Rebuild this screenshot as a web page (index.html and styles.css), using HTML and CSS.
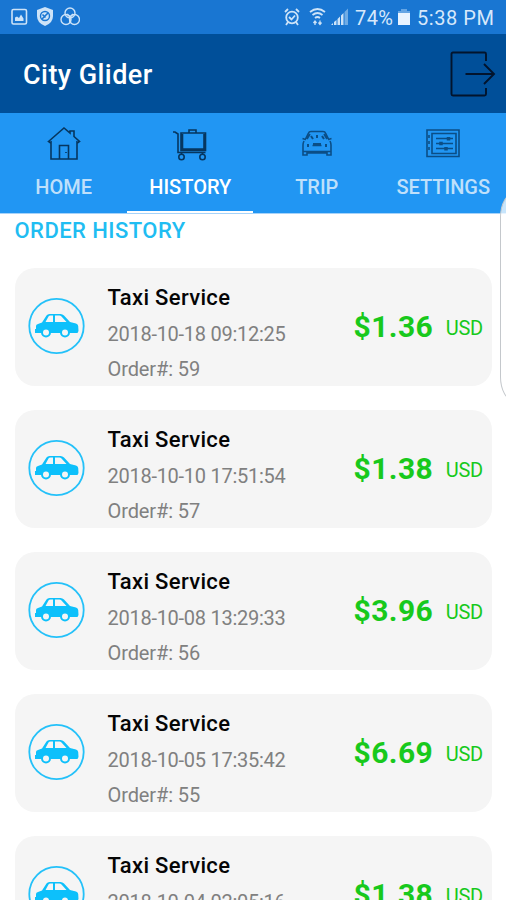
FILE: index.html
```html
<!DOCTYPE html>
<html lang="en">
<head>
<meta charset="utf-8">
<title>City Glider</title>
<link rel="stylesheet" href="styles.css">
</head>
<body>
<svg class="defs" aria-hidden="true">
  <symbol id="taxi" viewBox="0 0 58 58">
    <circle cx="28.500" cy="29" r="27.200" fill="none" stroke="#24c1f9" stroke-width="1.800"/>
    <path fill="#0dc0fb" fill-rule="evenodd" d="M7 36v-4h1v-3q0-1.500 2-2l4-1.500 4.500-7q1-1.500 3-1.500h11q2 0 3.500 1.500l6 6.500 6 1.500q2 .5 2.200 2.500l.3 5-1 2zM17.500 25H25v-6.500h-2.500q-1.500 0-2 1zM27 18.500V25h11.500l-5-5.500q-1-1-2-1z"/>
    <g fill="#f5f5f5" stroke="#0dc0fb" stroke-width="2"><circle cx="18" cy="35.500" r="4"/><circle cx="37" cy="35.500" r="4"/></g>
  </symbol>
</svg>
<div class="status">
  <svg class="notify" viewBox="0 0 70 20" width="70" height="20" fill="none" stroke="#cde3f8" stroke-width="1.600">
    <rect x="2" y="2.500" width="14.500" height="14.500" rx="1.500"/><path fill="#cde3f8" stroke="none" d="M5 14v-3.500l2-1 2 1.500 2-3.500 2.500 4V14z"/>
    <path fill="#cde3f8" stroke="none" d="M35 0l8 3v6q0 7-8 10-8-3-8-10V3z"/><circle cx="35" cy="9" r="4.500" stroke="#1976d2" stroke-width="1.400"/><path stroke="#1976d2" d="M32 12l6-6M32.500 7.500l3 3"/>
    <g stroke-width="1.400"><circle cx="60" cy="6" r="5"/><circle cx="56" cy="12.500" r="5"/><circle cx="64.500" cy="12.500" r="5"/><path d="M60 9v7M57 7l3 3 3-3"/></g>
  </svg>
  <svg class="signals" viewBox="0 0 66 20" width="66" height="20" fill="none" stroke="#cde3f8" stroke-width="1.800">
    <circle cx="9" cy="10.500" r="5.800"/><path d="M6 10l2.500 2.500L12 8.500M2 5l3-3M13 2l3 3M5 15l-2 3M13 15l2 3"/>
    <path d="M27 5q7.500-6 15 0M29.500 8q5-4 10 0M32 11q2.500-2 5 0"/><path stroke-width="1.300" d="M32 18v-4M30.500 16l1.500-2 1.500 2M37 13.500v4M35.500 15.500l1.500 2 1.500-2"/>
    <path fill="#cde3f8" stroke="none" d="M48 18l2-2v2zM51 15l2.500-2v5H51zM54.500 12L57 9.500V18h-2.500zM58 8.500L60.500 6v12H58z"/><path fill="#70ace5" stroke="none" d="M61.500 5L65 1.500V18h-3.500z"/>
  </svg>
  <span class="percent">74%</span>
  <svg class="battery" viewBox="0 0 12 18" width="12" height="18"><path fill="#65a5e4" d="M3 1h6v2h3v3H0V3h3z"/><path fill="#e8f3ff" d="M0 5h12v12H0z"/></svg>
  <span class="time">5:38 PM</span>
</div>
<header class="appbar">
  <h1>City Glider</h1>
  <svg viewBox="0 0 48 48" width="48" height="48" fill="none" stroke="#02142d" stroke-width="1.900"><path d="M36 11V4q0-1.500-1.500-1.500H3Q1.500 2.500 1.500 4v40q0 1.500 1.500 1.500h31.500q1.500 0 1.500-1.500v-6M15.500 24H44M34 14l10 10-10 10"/></svg>
</header>
<nav class="tabs">
  <a class="tab">
    <svg viewBox="0 0 36 36" width="36" height="36"><path d="M2.500 15.500L18 2l6 5V5h4v5.500l5.500 5-1.500 1-1-.5v17H5V16l-1 .500zM13.500 33V19.500h9V33M20 26v1M5 33h26"/></svg>
    <span>HOME</span>
  </a>
  <a class="tab active">
    <svg viewBox="0 0 36 36" width="36" height="36"><path d="M1 6h2l3 2v18.500h27.500M9 7h24.500v17.500H9zM17 7V4h7v3M10.500 8v15M32 8v15M9 23h24"/><circle cx="9.500" cy="31" r="2.700"/><circle cx="30.500" cy="31" r="2.700"/><path d="M9.500 27v2M30.500 27v2"/></svg>
    <span>HISTORY</span>
  </a>
  <a class="tab faint">
    <svg viewBox="0 0 36 36" width="36" height="36"><path d="M6 14l3.500-7q.5-1.500 2.500-1.500h12q2 0 2.500 1.500l3.500 7M5 15q-1 2-1 4v10h4v-2h20v2h4V19q0-2-1-4M3.500 12.500l3 1M32.500 12.500l-3 1M8 13l3-5M28 13l-3-5M13.500 19.500h9M4 25.500h28"/><path class="detail" d="M12 10l2 3M23 10l2 3M18 9v3M9 18v3M27 18v3M14 18h8"/></svg>
    <span>TRIP</span>
  </a>
  <a class="tab faint">
    <svg viewBox="0 0 36 36" width="36" height="36"><path d="M2 4h32v26.500H2zM7 7.500h24v20H7zM11 12.500h17M11 17.500h17M11 22.500h17M4 9v3M4 15v3M4 21v3"/><path class="knob" d="M23.500 11v3.500M16 15.800v3.500M21 21v3.500"/></svg>
    <span>SETTINGS</span>
  </a>
</nav>
<main>
  <h2>ORDER HISTORY</h2>
  <article class="card"><svg class="taxi"><use href="#taxi"/></svg><div class="info"><h3>Taxi Service</h3><p>2018-10-18 09:12:25</p><p class="order">Order#: 59</p></div><div class="price"><strong>$1.36</strong><span>USD</span></div></article>
  <article class="card"><svg class="taxi"><use href="#taxi"/></svg><div class="info"><h3>Taxi Service</h3><p>2018-10-10 17:51:54</p><p class="order">Order#: 57</p></div><div class="price"><strong>$1.38</strong><span>USD</span></div></article>
  <article class="card"><svg class="taxi"><use href="#taxi"/></svg><div class="info"><h3>Taxi Service</h3><p>2018-10-08 13:29:33</p><p class="order">Order#: 56</p></div><div class="price"><strong>$3.96</strong><span>USD</span></div></article>
  <article class="card"><svg class="taxi"><use href="#taxi"/></svg><div class="info"><h3>Taxi Service</h3><p>2018-10-05 17:35:42</p><p class="order">Order#: 55</p></div><div class="price"><strong>$6.69</strong><span>USD</span></div></article>
  <article class="card"><svg class="taxi"><use href="#taxi"/></svg><div class="info"><h3>Taxi Service</h3><p>2018-10-04 02:05:16</p></div><div class="price"><strong>$1.38</strong><span>USD</span></div></article>
</main>
<div class="edge-handle"></div>
</body>
</html>
```

FILE: styles.css
```css
* { box-sizing: border-box; margin: 0; padding: 0; }
body { position: relative; width: 506px; height: 900px; overflow: hidden; display: flex; flex-direction: column; background: #fff; font-family: Roboto, "Liberation Sans", sans-serif; }
svg { display: block; flex: none; }
.defs { position: absolute; width: 0; height: 0; }
.status { height: 34px; flex: none; display: flex; align-items: center; padding: 0 11px 0 10px; background: #1976d2; color: #d6e8fb; font-size: 20px; line-height: 34px; white-space: nowrap; }
.signals { margin-left: auto; margin-right: 6px; }
.percent { width: 39px; letter-spacing: .4px; padding-top: 1px; }
.battery { margin: 0 7px 0 4px; }
.time { width: 78px; padding-top: 1px; letter-spacing: .55px; }
.appbar { height: 79px; flex: none; display: flex; align-items: center; justify-content: space-between; padding: 0 8px 0 23px; background: #004f99; }
h1 { color: #fff; font-size: 27px; line-height: 32px; font-weight: 500; letter-spacing: .45px; padding-top: 2px; }
.tabs { height: 100px; flex: none; display: grid; grid-template-columns: repeat(4, 126.500px); background: #2196f3; box-shadow: 0 1px #a6d3fa; }
.tab { display: flex; flex-direction: column; align-items: center; padding: 13px 0 0 1px; color: #bfe0fb; font-size: 20px; font-weight: 500; line-height: 24px; }
.tab span { margin-top: 13px; }
.tab svg { fill: none; stroke: #06365f; stroke-width: 1.600; }
.tab.faint svg { stroke: #0b4e86; }
.tab .detail { stroke-width: 2; }
.tab .knob { stroke-width: 3.500; }
.tab.active { color: #fff; border-bottom: 2px solid #fff; }
main { padding: 5px 14px 0 14.500px; }
h2 { color: #1fbdf2; font-size: 22px; line-height: 26px; font-weight: 500; letter-spacing: .45px; margin-bottom: 24px; }
.card { height: 118px; margin-bottom: 24px; padding-right: 9px; display: flex; border-radius: 20px; background: #f5f5f5; }
.taxi { width: 58px; height: 58px; margin: 29px 0 0 13px; }
.info { margin: 17px 0 0 22px; }
h3 { color: #050505; font-size: 22px; font-weight: 500; line-height: 26px; letter-spacing: .33px; }
.info p { color: #808080; font-size: 20px; line-height: 24px; margin-top: 11px; letter-spacing: -.27px; }
.info .order { margin-top: 11px; letter-spacing: -.1px; }
.price { margin-left: auto; height: 118px; display: flex; align-items: center; color: #18c91c; }
.price strong { font-size: 30px; font-weight: 700; letter-spacing: .4px; padding-bottom: 1px; }
.price span { margin-left: 12.500px; padding-top: 2px; font-size: 20px; letter-spacing: -.2px; }
.edge-handle { position: absolute; left: 500px; top: 193px; width: 30px; height: 208px; border: 1px solid #c4c8cc; border-radius: 14px / 24px; background: rgba(255,255,255,.75); }
```
